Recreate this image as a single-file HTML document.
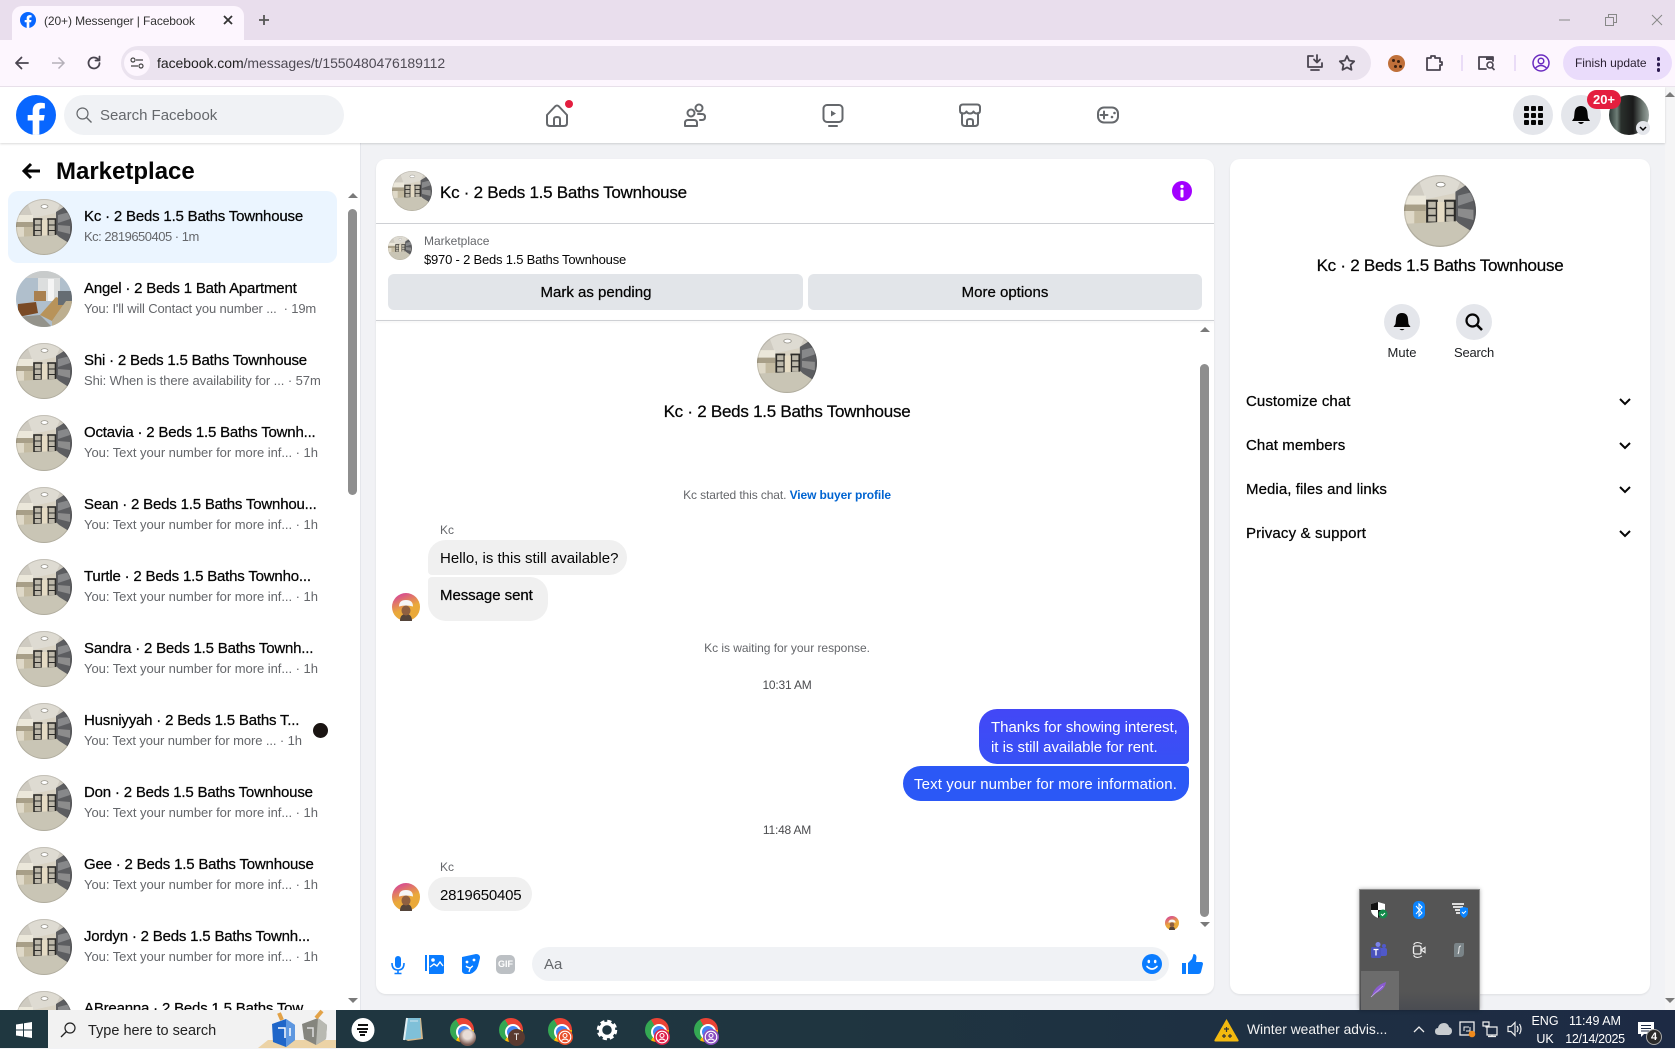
<!DOCTYPE html>
<html lang="en"><head><meta charset="utf-8"><title>Messenger | Facebook</title>
<style>
*{box-sizing:border-box;margin:0;padding:0}
html,body{width:1675px;height:1048px;overflow:hidden;background:#f1f2f5;font-family:"Liberation Sans",sans-serif;color:#050505}
.a{position:absolute}
.t{position:absolute;white-space:nowrap;height:20px;line-height:20px}
.m{-webkit-text-stroke:.25px currentColor}
.b{border-radius:50%}
.c{text-align:center;transform:translateX(-50%)}
svg{position:absolute;overflow:visible}
.title{font-size:15px;left:84px;letter-spacing:-.19px}
.sub{font-size:13px;left:84px;color:#65676b;letter-spacing:-.04px}
.h17{font-size:17px;letter-spacing:-.26px}
.ic{fill:none;stroke:#65686c;stroke-width:2;stroke-linecap:round;stroke-linejoin:round}
.tb{fill:none;stroke:#4a4550;stroke-width:1.8;stroke-linecap:round;stroke-linejoin:round}
.rowt{font-size:15px;left:1246px;letter-spacing:.08px}
.chr{position:absolute;width:24px;height:24px;border-radius:50%;background:conic-gradient(from -30deg,#ea4335 0 120deg,#fbbc05 120deg 240deg,#34a853 240deg 360deg);top:1018px}
.chr:after{content:"";position:absolute;left:6px;top:6px;width:12px;height:12px;border-radius:50%;background:#4285f4;border:2px solid #fff}
.tray{color:#fff;font-size:12.5px;text-align:center}
</style></head><body>
<svg width="0" height="0" style="position:absolute"><defs>
<clipPath id="cc"><circle cx="28" cy="28" r="28"/></clipPath>
<g id="room"><g clip-path="url(#cc)">
<rect width="56" height="56" fill="#d9d3c4"/>
<polygon points="0,0 56,0 56,10 40,14 17,19 0,15" fill="#cfcbc1"/>
<polygon points="10,0 46,0 40,14 17,19" fill="#dedbd2"/>
<ellipse cx="28.500" cy="7.500" rx="3.500" ry="1.800" fill="#fff" stroke="#8f8c83" stroke-width=".7"/>
<rect x="0" y="16" width="17" height="7" fill="#ebe7da"/>
<rect x="0" y="23" width="17" height="5" fill="#a89f88"/>
<rect x="0" y="28" width="8" height="10" fill="#dfd9c8"/><rect x="8" y="28" width="10" height="10" fill="#c4bba2"/>
<polygon points="40,13 48,8 56,12 56,46 51,46 40,35" fill="#5c5d60"/>
<polygon points="42,16 54,13 54,20 42,24" fill="#87888a"/><polygon points="42,26 54,27 54,35 42,32" fill="#8c8c8c"/>
<rect x="18" y="20" width="7.500" height="17" fill="#bdb8aa" stroke="#2c2b28" stroke-width="1.600"/>
<rect x="32" y="20" width="7.500" height="17" fill="#bdb8aa" stroke="#2c2b28" stroke-width="1.600"/>
<rect x="25.800" y="21" width="5.800" height="16" fill="#e5dbc4"/>
<path d="M18 26h7.500M18 31.500h7.500M32 26h7.500M32 31.500h7.500" stroke="#2c2b28" stroke-width="1.100"/>
<polygon points="0,38 18,37 40,36 56,46 56,56 0,56" fill="#c9c5b5"/>
<circle cx="28" cy="28" r="27.500" fill="none" stroke="#000" stroke-opacity=".12"/>
</g></g>
<g id="apt"><g clip-path="url(#cc)">
<rect width="56" height="56" fill="#b0bfcc"/>
<rect x="22" y="0" width="22" height="30" fill="#dcdede"/>
<rect x="32" y="8" width="6" height="22" fill="#f5f5f5"/>
<rect x="0" y="0" width="56" height="7" fill="#c8cbcb"/>
<polygon points="2,33 20,31 22,42 2,46" fill="#7a4a25"/><rect x="18" y="20" width="12" height="10" fill="#a9804f"/>
<polygon points="24,44 40,26 50,30 36,50" fill="#b8935a"/>
<rect x="42" y="20" width="14" height="14" fill="#666d73"/>
<polygon points="0,46 24,44 36,56 0,56" fill="#94938b"/>
<polygon points="36,50 50,30 56,30 56,56 36,56" fill="#bdaf90"/>
</g></g>
<g id="fb"><circle cx="18" cy="18" r="18" fill="#0866ff"/><path d="M25 23l.8-5H21v-3.500c0-1.400.5-2.500 2.700-2.500H26V7.400c-1.300-.2-2.700-.4-4-.4-4.100 0-7 2.500-7 7v4h-4.500v5H15v12.700c1 .2 2 .3 3 .3s2-.1 3-.3V23h4z" fill="#fff"/></g>
<linearGradient id="kg" x1="0" y1="0" x2=".4" y2="1"><stop offset=".15" stop-color="#d84f8e"/><stop offset=".65" stop-color="#eaa93a"/></linearGradient>
<g id="kc"><circle cx="14" cy="14" r="14" fill="url(#kg)"/><path d="M8 28q0-7 6-7t6 7z" fill="#54443a"/><ellipse cx="14" cy="17.500" rx="4.500" ry="5" fill="#8f6040"/><path d="M7 13.500Q7 7 14 7t7 6.500q-7-2-14 0z" fill="#f6f6f6"/></g>
<g id="pb"><circle cx="8" cy="8" r="8" fill="currentColor"/><circle cx="8" cy="8" r="5.800" fill="none" stroke="#fff" stroke-width="1.100"/><circle cx="8" cy="6.500" r="2" fill="none" stroke="#fff" stroke-width="1.100"/><path d="M4.500 11.500q3.500-3 7 0" fill="none" stroke="#fff" stroke-width="1.100"/></g>
</defs></svg>

<!-- Chrome -->
<div class="a" style="left:0;top:0;width:1675px;height:40px;background:#e9deed"></div>
<div class="a" style="left:12px;top:6px;width:232px;height:34px;background:#fdf6fe;border-radius:10px 10px 0 0"></div>
<svg style="left:20px;top:12px" width="16" height="16" viewBox="0 0 36 36"><use href="#fb"/></svg>
<div class="t" style="left:44px;top:11px;font-size:12px;letter-spacing:-.1px;color:#333">(20+) Messenger | Facebook</div>
<svg style="left:223px;top:15px" width="10" height="10"><path d="M1 1l8 8M9 1l-8 8" stroke="#333" stroke-width="1.800"/></svg>
<svg style="left:258px;top:14px" width="12" height="12"><path d="M6 1v10M1 6h10" stroke="#555" stroke-width="1.800"/></svg>
<svg style="left:1559px;top:15px" width="12" height="10"><path d="M0 5h11" stroke="#888"/></svg>
<svg style="left:1605px;top:14px" width="12" height="12"><path d="M.5 3.500h8v8h-8zM3.500 3V.5h8v8H9" fill="none" stroke="#888"/></svg>
<svg style="left:1651px;top:14px" width="12" height="12"><path d="M1 1l10 10M11 1L1 11" stroke="#888"/></svg>
<div class="a" style="left:0;top:40px;width:1675px;height:47px;background:#fdf6fe;border-bottom:1px solid #eae2ec"></div>
<svg style="left:14px;top:55px" width="16" height="16"><path class="tb" d="M14 8H2M7.500 2.500L2 8l5.500 5.500" stroke-width="1.500"/></svg>
<svg style="left:50px;top:55px" width="16" height="16"><path d="M2 8h12M8.500 2.500L14 8l-5.500 5.500" fill="none" stroke="#b5b0b9" stroke-width="1.500"/></svg>
<svg style="left:86px;top:55px" width="16" height="16"><path class="tb" d="M13.500 8a5.500 5.500 0 1 1-1.700-4M13.500 1.500v4h-4"/></svg>
<div class="a" style="left:121px;top:46px;width:1250px;height:34px;background:#ebe3ef;border-radius:17px"></div>
<div class="a b" style="left:124px;top:50px;width:26px;height:26px;background:#fdf6fe"></div>
<svg style="left:130px;top:56px" width="14" height="14"><path d="M6 4h7M1 10h7" stroke="#444" stroke-width="1.200"/><circle cx="3" cy="4" r="2" fill="none" stroke="#444" stroke-width="1.200"/><circle cx="11" cy="10" r="2" fill="none" stroke="#444" stroke-width="1.200"/></svg>
<div class="t" style="left:157px;top:53px;font-size:14px;letter-spacing:-.05px;color:#1f1f1f">facebook.com<span style="color:#4f4b55">/messages/t/1550480476189112</span></div>
<svg style="left:1306px;top:54px" width="18" height="18"><path class="tb" d="M7 2H2v11h14V9M5 16h8M11 1v7M8 5.500l3 3 3-3"/></svg>
<svg style="left:1338px;top:54px" width="18" height="18"><path class="tb" d="M9 2l2.200 4.600 5 .7-3.600 3.500.9 5L9 13.400 4.500 15.800l.9-5L1.800 7.300l5-.7z"/></svg>
<div class="a b" style="left:1388px;top:55px;width:17px;height:17px;background:#c0703a"></div>
<div class="a" style="left:1392px;top:59px;width:3px;height:3px;background:#3a2010;border-radius:50%;box-shadow:5px 1px #3a2010,2px 6px #3a2010,7px 6px #3a2010"></div>
<svg style="left:1425px;top:54px" width="18" height="18"><path class="tb" d="M2 4h4V2h4v2h5v4h2v3h-2v5H2z"/></svg>
<div class="a" style="left:1461px;top:55px;width:2px;height:16px;background:#eadcf7"></div>
<svg style="left:1477px;top:54px" width="19" height="18"><path class="tb" d="M9 15H2V3h14v4"/><rect x="9" y="3" width="7" height="3" fill="#4a4550"/><circle cx="13" cy="11" r="3" fill="none" stroke="#4a4550" stroke-width="1.600"/><path d="M15 13.500l2.500 2.500" stroke="#4a4550" stroke-width="1.600"/></svg>
<div class="a" style="left:1514px;top:55px;width:2px;height:16px;background:#eadcf7"></div>
<svg style="left:1532px;top:54px" width="18" height="18"><circle cx="9" cy="9" r="8" fill="none" stroke="#6a2bc0" stroke-width="1.500"/><circle cx="9" cy="7" r="2.800" fill="none" stroke="#6a2bc0" stroke-width="1.500"/><path d="M3.500 14q5.500-5 11 0" fill="none" stroke="#6a2bc0" stroke-width="1.500"/></svg>
<div class="a" style="left:1563px;top:46px;width:109px;height:34px;background:#eadcfb;border-radius:17px"></div>
<div class="t" style="left:1575px;top:53px;font-size:12px;letter-spacing:-.04px;color:#2c2233">Finish update</div>
<div class="a b" style="left:1656.500px;top:57px;width:3.500px;height:3.500px;background:#2c1a50;box-shadow:0 5.500px #2c1a50,0 11px #2c1a50"></div>

<!-- FB nav -->
<div class="a" style="left:0;top:87px;width:1665px;height:56px;background:#fff;box-shadow:0 1px 2px rgba(0,0,0,.15);z-index:3"></div>
<div style="position:absolute;left:0;top:0;z-index:4">
<svg style="left:16px;top:95px" width="40" height="40" viewBox="0 0 36 36"><use href="#fb"/></svg>
<div class="a" style="left:64px;top:95px;width:280px;height:40px;background:#f0f2f5;border-radius:20px"></div>
<svg style="left:76px;top:107px" width="16" height="16"><circle cx="6.500" cy="6.500" r="5.500" fill="none" stroke="#65686c" stroke-width="1.200"/><path d="M10.500 10.500l5 5" stroke="#65686c" stroke-width="1.400"/></svg>
<div class="t" style="left:100px;top:106px;font-size:15px;letter-spacing:-.02px;color:#65686c">Search Facebook</div>
<svg style="left:545px;top:103px" width="24" height="24"><path class="ic" d="M2 12L10 3.500q2-2 4 0L22 12v8q0 3-3 3H5q-3 0-3-3z M9 23v-7q0-2 3-2t3 2v7"/></svg>
<div class="a b" style="left:565px;top:100px;width:8px;height:8px;background:#e41e3f"></div>
<svg style="left:683px;top:103px" width="24" height="24"><g class="ic"><circle cx="16" cy="5" r="3.500"/><circle cx="8" cy="10" r="3.500"/><path d="M2 23v-3q0-3 3-3h6q3 0 3 3v3zM15 11h4q3 0 3 3t-3 3h-2"/></g></svg>
<svg style="left:821px;top:103px" width="24" height="24"><rect class="ic" x="2.500" y="2" width="19" height="17" rx="3.500"/><path d="M10 7.500l5 3-5 3z" fill="#65686c"/><path class="ic" d="M8 23h8"/></svg>
<svg style="left:958px;top:103px" width="24" height="24"><g class="ic"><path d="M4 10v10q0 3 3 3h10q3 0 3-3V10"/><path d="M5 1.500h14q3 0 3 3v3q0 3-3 3-2.500 0-3.500-2-1 2-3.500 2t-3.500-2q-1 2-3.500 2-3 0-3-3v-3q0-3 3-3z"/><path d="M9 23v-5q0-2 3-2t3 2v5"/></g></svg>
<svg style="left:1096px;top:103px" width="24" height="24"><rect class="ic" x="2" y="4.500" width="20" height="15" rx="6"/><path class="ic" d="M8 8.500v7M4.500 12h7"/><circle cx="16" cy="14" r="1.300" fill="#65686c"/><circle cx="18.500" cy="10" r="1.300" fill="#65686c"/></svg>
<div class="a b" style="left:1513px;top:95px;width:40px;height:40px;background:#e4e6eb"></div>
<div class="a" style="left:1524px;top:106px;width:5px;height:5px;border-radius:1px;background:#050505;box-shadow:7px 0 #050505,14px 0 #050505,0 7px #050505,7px 7px #050505,14px 7px #050505,0 14px #050505,7px 14px #050505,14px 14px #050505"></div>
<div class="a b" style="left:1561px;top:95px;width:40px;height:40px;background:#e4e6eb"></div>
<svg style="left:1571px;top:105px" width="20" height="20"><path d="M10 1q6 0 6.500 7l.5 5 2 3H1l2-3 .5-5Q4 1 10 1zM7 17h6q-3 4-6 0z" fill="#050505"/></svg>
<div class="a b" style="left:1609px;top:95px;width:40px;height:40px;background:linear-gradient(90deg,#2c3835 0,#6f7f78 20%,#2a302c 30%,#1a1a1a 60%,#6f7a74 85%,#9aa4a0 100%)"></div>
<div class="a" style="left:1587px;top:90px;width:34px;height:19px;background:#e41e3f;border-radius:10px;color:#fff;font-size:13px;font-weight:bold;text-align:center;line-height:19px">20+</div>
<div class="a b" style="left:1636px;top:121px;width:14px;height:14px;background:#e4e6eb"></div>
<svg style="left:1639px;top:126px" width="8" height="6"><path d="M1 1l3 3 3-3" fill="none" stroke="#050505" stroke-width="1.500"/></svg>
</div>

<!-- Page scrollbar -->
<div class="a" style="left:1665px;top:87px;width:10px;height:923px;background:#f5f5f6"></div>
<svg style="left:1665px;top:92px" width="10" height="6"><path d="M5 0l5 5H0z" fill="#7a7a7a"/></svg>
<svg style="left:1665px;top:998px" width="10" height="6"><path d="M0 0h10L5 5z" fill="#7a7a7a"/></svg>

<!-- Sidebar -->
<div class="a" style="left:0;top:143px;width:361px;height:867px;background:#fff;border-right:1px solid #e4e6eb;overflow:hidden">
 <div style="position:absolute;left:0;top:-143px">
 <svg style="left:22px;top:162px" width="20" height="18"><path d="M18 9H3M9 2L2 9l7 7" fill="none" stroke="#050505" stroke-width="3"/></svg>
 <div class="t" style="left:56px;top:162px;font-size:24px;font-weight:bold;letter-spacing:0">Marketplace</div>
 <div class="a" style="left:8px;top:191px;width:329px;height:72px;background:#ebf5ff;border-radius:10px"></div>
 <svg style="left:16px;top:199px" width="56" height="56"><use href="#room"/></svg><div class="t m title" style="top:207px">Kc · 2 Beds 1.5 Baths Townhouse</div><div class="t sub" style="top:227px;letter-spacing:-.5px">Kc: 2819650405 · 1m</div>
 <svg style="left:16px;top:271px" width="56" height="56"><use href="#apt"/></svg><div class="t m title" style="top:279px">Angel · 2 Beds 1 Bath Apartment</div><div class="t sub" style="top:299px;letter-spacing:-.14px">You: I'll will Contact you number ... &nbsp;· 19m</div>
 <svg style="left:16px;top:343px" width="56" height="56"><use href="#room"/></svg><div class="t m title" style="top:351px">Shi · 2 Beds 1.5 Baths Townhouse</div><div class="t sub" style="top:371px;letter-spacing:-.07px">Shi: When is there availability for ... · 57m</div>
 <svg style="left:16px;top:415px" width="56" height="56"><use href="#room"/></svg><div class="t m title" style="top:423px">Octavia · 2 Beds 1.5 Baths Townh...</div><div class="t sub" style="top:443px">You: Text your number for more inf... · 1h</div>
 <svg style="left:16px;top:487px" width="56" height="56"><use href="#room"/></svg><div class="t m title" style="top:495px">Sean · 2 Beds 1.5 Baths Townhou...</div><div class="t sub" style="top:515px">You: Text your number for more inf... · 1h</div>
 <svg style="left:16px;top:559px" width="56" height="56"><use href="#room"/></svg><div class="t m title" style="top:567px">Turtle · 2 Beds 1.5 Baths Townho...</div><div class="t sub" style="top:587px">You: Text your number for more inf... · 1h</div>
 <svg style="left:16px;top:631px" width="56" height="56"><use href="#room"/></svg><div class="t m title" style="top:639px">Sandra · 2 Beds 1.5 Baths Townh...</div><div class="t sub" style="top:659px">You: Text your number for more inf... · 1h</div>
 <svg style="left:16px;top:703px" width="56" height="56"><use href="#room"/></svg><div class="t m title" style="top:711px">Husniyyah · 2 Beds 1.5 Baths T...</div><div class="t sub" style="top:731px;letter-spacing:-.1px">You: Text your number for more ... · 1h</div>
 <div class="a b" style="left:313px;top:723px;width:15px;height:15px;background:#1a1412"></div>
 <svg style="left:16px;top:775px" width="56" height="56"><use href="#room"/></svg><div class="t m title" style="top:783px">Don · 2 Beds 1.5 Baths Townhouse</div><div class="t sub" style="top:803px">You: Text your number for more inf... · 1h</div>
 <svg style="left:16px;top:847px" width="56" height="56"><use href="#room"/></svg><div class="t m title" style="top:855px">Gee · 2 Beds 1.5 Baths Townhouse</div><div class="t sub" style="top:875px">You: Text your number for more inf... · 1h</div>
 <svg style="left:16px;top:919px" width="56" height="56"><use href="#room"/></svg><div class="t m title" style="top:927px">Jordyn · 2 Beds 1.5 Baths Townh...</div><div class="t sub" style="top:947px">You: Text your number for more inf... · 1h</div>
 <svg style="left:16px;top:991px" width="56" height="56"><use href="#room"/></svg><div class="t m title" style="top:999px">ABreanna · 2 Beds 1.5 Baths Tow...</div>
 <svg style="left:348px;top:193px" width="10" height="6"><path d="M5 0l5 5H0z" fill="#7a7a7a"/></svg>
 <div class="a" style="left:348px;top:209px;width:9px;height:286px;background:#8e8e8e;border-radius:5px"></div>
 <svg style="left:348px;top:998px" width="10" height="6"><path d="M0 0h10L5 5z" fill="#7a7a7a"/></svg>
 </div>
</div>

<!-- Chat card -->
<div class="a" style="left:376px;top:159px;width:838px;height:835px;background:#fff;border-radius:10px;box-shadow:0 1px 2px rgba(0,0,0,.08)"></div>
<svg style="left:392px;top:171px" width="40" height="40" viewBox="0 0 56 56"><use href="#room"/></svg>
<div class="t m h17" style="left:440px;top:183px">Kc · 2 Beds 1.5 Baths Townhouse</div>
<svg style="left:1172px;top:181px" width="20" height="20"><circle cx="10" cy="10" r="10" fill="#a200ff"/><circle cx="10" cy="5.500" r="1.700" fill="#fff"/><rect x="8.500" y="8.500" width="3" height="8" rx="1" fill="#fff"/></svg>
<div class="a" style="left:376px;top:223px;width:838px;height:1px;background:#ced0d4"></div>
<svg style="left:388px;top:236px" width="24" height="24" viewBox="0 0 56 56"><use href="#room"/></svg>
<div class="t" style="left:424px;top:231px;font-size:12px;color:#65676b">Marketplace</div>
<div class="t" style="left:424px;top:250px;font-size:13px;letter-spacing:-.2px">$970 - 2 Beds 1.5 Baths Townhouse</div>
<div class="a" style="left:388px;top:274px;width:415px;height:36px;background:#e2e5e9;border-radius:6px"></div>
<div class="a" style="left:808px;top:274px;width:394px;height:36px;background:#e2e5e9;border-radius:6px"></div>
<div class="t m c" style="left:596px;top:283px;font-size:15px">Mark as pending</div>
<div class="t m c" style="left:1005px;top:283px;font-size:15px">More options</div>
<div class="a" style="left:376px;top:320px;width:838px;height:1px;background:#ced0d4;box-shadow:0 1px 2px rgba(0,0,0,.08)"></div>

<svg style="left:757px;top:333px" width="60" height="60" viewBox="0 0 56 56"><use href="#room"/></svg>
<div class="t m c h17" style="left:787px;top:402px">Kc · 2 Beds 1.5 Baths Townhouse</div>
<div class="t c" style="left:787px;top:485px;font-size:12px;letter-spacing:-.1px;color:#65676b">Kc started this chat. <b style="color:#0064d1">View buyer profile</b></div>
<div class="t" style="left:440px;top:520px;font-size:12px;color:#65676b">Kc</div>
<div class="a" style="left:428px;top:540px;width:199px;height:35px;background:#f0f0f0;border-radius:18px 18px 18px 4px"></div>
<div class="t" style="left:440px;top:549px;font-size:15px">Hello, is this still available?</div>
<div class="a" style="left:428px;top:577px;width:120px;height:44px;background:#f0f0f0;border-radius:4px 18px 18px 18px"></div>
<div class="t m" style="left:440px;top:586px;font-size:15px;letter-spacing:-.05px">Message sent</div>
<svg style="left:392px;top:593px" width="28" height="28"><use href="#kc"/></svg>
<div class="t c" style="left:787px;top:638px;font-size:12px;letter-spacing:-.03px;color:#65676b">Kc is waiting for your response.</div>
<div class="t c" style="left:787px;top:675px;font-size:12px;letter-spacing:-.2px;color:#4b4c4f">10:31 AM</div>
<div class="a" style="left:979px;top:709px;width:210px;height:55px;background:linear-gradient(#4347f6,#3751f5);border-radius:18px 18px 4px 18px"></div>
<div class="t" style="left:991px;top:718px;font-size:15px;color:#fff;letter-spacing:-.03px">Thanks for showing interest,</div>
<div class="t" style="left:991px;top:738px;font-size:15px;color:#fff;letter-spacing:-.03px">it is still available for rent.</div>
<div class="a" style="left:903px;top:766px;width:286px;height:35px;background:#2b58f6;border-radius:18px 4px 18px 18px"></div>
<div class="t" style="left:914px;top:775px;font-size:15px;color:#fff;letter-spacing:.12px">Text your number for more information.</div>
<div class="t c" style="left:787px;top:820px;font-size:12px;letter-spacing:-.2px;color:#4b4c4f">11:48 AM</div>
<div class="t" style="left:440px;top:857px;font-size:12px;color:#65676b">Kc</div>
<div class="a" style="left:428px;top:877px;width:104px;height:34px;background:#f0f0f0;border-radius:18px"></div>
<div class="t" style="left:440px;top:886px;font-size:15px;letter-spacing:-.2px">2819650405</div>
<svg style="left:392px;top:883px" width="28" height="28"><use href="#kc"/></svg>
<svg style="left:1165px;top:916px" width="14" height="14" viewBox="0 0 28 28"><use href="#kc"/></svg>
<svg style="left:1200px;top:327px" width="10" height="6"><path d="M5 0l5 5H0z" fill="#7a7a7a"/></svg>
<div class="a" style="left:1200px;top:364px;width:9px;height:553px;background:#8e8e8e;border-radius:5px"></div>
<svg style="left:1200px;top:922px" width="10" height="6"><path d="M0 0h10L5 5z" fill="#7a7a7a"/></svg>

<svg style="left:390px;top:955px" width="16" height="20"><rect x="5" y="1" width="6" height="12" rx="3" fill="#0a7cff"/><path d="M2 8q0 7 6 7t6-7M8 15v3M4.500 18.500h7" fill="none" stroke="#0a7cff" stroke-width="1.600"/></svg>
<svg style="left:424px;top:954px" width="20" height="20"><path d="M2 1v16" stroke="#0a7cff" stroke-width="2"/><path d="M5 1h13q2 0 2 2v15q0 2-2 2H5z" fill="#0a7cff"/><circle cx="9" cy="6" r="1.800" fill="#fff"/><path d="M6 13l4-3 3 2 3-4 3 4" fill="none" stroke="#fff" stroke-width="1.400"/></svg>
<svg style="left:460px;top:954px" width="20" height="20"><path d="M2 3l14-3q4 0 4 4l-2 8q-2 6-8 8H5q-3-1-3-3z" fill="#0a7cff"/><circle cx="7" cy="8" r="1.400" fill="#fff"/><circle cx="14" cy="6" r="1.400" fill="#fff"/><path d="M9 18q1-5 4-6M6 12q3 3 6 1" fill="none" stroke="#fff" stroke-width="1.300"/></svg>
<div class="a" style="left:496px;top:955px;width:19px;height:19px;border-radius:5px;background:#bcc0c4;color:#fff;font-size:9px;font-weight:bold;text-align:center;line-height:19px">GIF</div>
<div class="a" style="left:532px;top:947px;width:637px;height:34px;background:#f0f2f5;border-radius:18px"></div>
<div class="t" style="left:544px;top:955px;font-size:15px;color:#65686c">Aa</div>
<svg style="left:1142px;top:954px" width="20" height="20"><circle cx="10" cy="10" r="10" fill="#0a7cff"/><ellipse cx="6.800" cy="7.500" rx="1.300" ry="1.800" fill="#fff"/><ellipse cx="13.200" cy="7.500" rx="1.300" ry="1.800" fill="#fff"/><path d="M5 12.500q5 5 10 0" fill="none" stroke="#fff" stroke-width="1.600" stroke-linecap="round"/></svg>
<svg style="left:1181px;top:953px" width="22" height="22"><path d="M1 10h4v11H1zM7 10l4-4q1-3 1.500-5 3 0 3 3.500L15 9h5q2 0 2 2l-2 8q-.5 2-3 2H7z" fill="#0a7cff"/></svg>

<!-- Right card -->
<div class="a" style="left:1230px;top:159px;width:420px;height:835px;background:#fff;border-radius:10px;box-shadow:0 1px 2px rgba(0,0,0,.08)"></div>
<svg style="left:1404px;top:175px" width="72" height="72" viewBox="0 0 56 56"><use href="#room"/></svg>
<div class="t m c h17" style="left:1440px;top:256px">Kc · 2 Beds 1.5 Baths Townhouse</div>
<div class="a b" style="left:1384px;top:304px;width:36px;height:36px;background:#e4e6eb"></div>
<svg style="left:1393px;top:312px" width="18" height="20"><path d="M9 1q5.500 0 6 6l.5 5 2 3H.5l2-3 .5-5Q3.500 1 9 1zM6.500 17h5q-2.500 2.500-5 0z" fill="#050505"/></svg>
<div class="a b" style="left:1456px;top:304px;width:36px;height:36px;background:#e4e6eb"></div>
<svg style="left:1465px;top:313px" width="18" height="18"><circle cx="7.500" cy="7.500" r="6" fill="none" stroke="#050505" stroke-width="2.200"/><path d="M12 12l5 5" stroke="#050505" stroke-width="2.600"/></svg>
<div class="t c" style="left:1402px;top:343px;font-size:13px;color:#1c1e21">Mute</div>
<div class="t c" style="left:1474px;top:343px;font-size:13px;letter-spacing:-.2px;color:#1c1e21">Search</div>
<div class="t m rowt" style="top:392px">Customize chat</div>
<div class="t m rowt" style="top:436px">Chat members</div>
<div class="t m rowt" style="top:480px">Media, files and links</div>
<div class="t m rowt" style="top:524px;letter-spacing:.15px">Privacy &amp; support</div>
<svg style="left:1619px;top:398px" width="12" height="8"><path d="M1 1l5 5 5-5" fill="none" stroke="#050505" stroke-width="2"/></svg>
<svg style="left:1619px;top:442px" width="12" height="8"><path d="M1 1l5 5 5-5" fill="none" stroke="#050505" stroke-width="2"/></svg>
<svg style="left:1619px;top:486px" width="12" height="8"><path d="M1 1l5 5 5-5" fill="none" stroke="#050505" stroke-width="2"/></svg>
<svg style="left:1619px;top:530px" width="12" height="8"><path d="M1 1l5 5 5-5" fill="none" stroke="#050505" stroke-width="2"/></svg>

<!-- Tray popup -->
<div class="a" style="left:1359px;top:889px;width:121px;height:121px;background:linear-gradient(#555 85%,#4a4c52);border:1px solid #8a8a8a;border-bottom:none;box-shadow:0 0 4px rgba(0,0,0,.3);z-index:6"></div>
<div class="a" style="left:1361px;top:971px;width:38px;height:39px;background:#6c6c6c;z-index:6"></div>
<div style="position:absolute;left:0;top:0;z-index:7">
<svg style="left:1371px;top:902px" width="17" height="17"><path d="M7 0l7 2v6q0 5-7 8-7-3-7-8V2z" fill="#fff"/><path d="M7 0v8H0V2zM7 8h7q0 5-7 8z" fill="#111"/><circle cx="12" cy="12" r="4.500" fill="#128a4a"/><path d="M10 12l1.500 1.500L14 11" fill="none" stroke="#fff"/></svg>
<svg style="left:1413px;top:901px" width="12" height="18"><rect width="12" height="18" rx="5" fill="#0a84ff"/><path d="M3 5l6 7-3 3V3l3 3-6 7" fill="none" stroke="#fff"/></svg>
<svg style="left:1451px;top:902px" width="17" height="16"><path d="M1 2h12M2 5h10M4 8h6M5 11h4" stroke="#ddd" stroke-width="2"/><path d="M9 6l4-1 4 1v4q0 4-4 6-4-2-4-6z" fill="#0a84ff"/><path d="M11 10l1.500 1.500L15 9" fill="none" stroke="#fff"/></svg>
<svg style="left:1371px;top:942px" width="16" height="16"><circle cx="7" cy="2.500" r="2.500" fill="#7b83eb"/><circle cx="13" cy="4" r="2" fill="#5059c9"/><rect x="8" y="6" width="8" height="8" rx="2" fill="#5059c9"/><rect x="0" y="5" width="10" height="11" rx="1.500" fill="#4b53bc"/><path d="M2.500 7.500h5M5 7.500v6" stroke="#fff" stroke-width="1.300"/></svg>
<svg style="left:1412px;top:941px" width="16" height="18"><path d="M2 4V3q3-3 8 0M2 14v1q3 3 8 0" fill="none" stroke="#eee"/><rect x="1.500" y="5" width="7.500" height="8" rx="1.500" fill="none" stroke="#eee" stroke-width="1.300"/><path d="M9 9l4-2.500v5z" fill="none" stroke="#eee" stroke-width="1.200"/></svg>
<svg style="left:1453px;top:942px" width="12" height="16"><path d="M3 1h8v10q0 4-4 4H1V4q0-3 2-3z" fill="#7a8488"/><path d="M8 4Q6 4 6 7t-1 5" fill="none" stroke="#eee"/></svg>
<svg style="left:1371px;top:981px" width="16" height="16"><path d="M1 15Q3 5 15 1q-1 8-10 11z" fill="#8a5cd0"/><path d="M0 16L12 5" stroke="#c9aef0" stroke-width=".8"/></svg>
</div>

<!-- Taskbar -->
<div class="a" style="left:0;top:1010px;width:1675px;height:38px;background:linear-gradient(90deg,#1f3740,#1f3540 50%,#1d2a44);z-index:5"></div>
<div style="position:absolute;left:0;top:0;z-index:8">
<svg style="left:16px;top:1022px" width="16" height="16"><path d="M0 2.500l7-1v6H0zM8 1.300l8-1.300v7.500H8zM0 8.500h7v6l-7-1zM8 8.500h8V16l-8-1.300z" fill="#fff"/></svg>
<div class="a" style="left:48px;top:1010px;width:288px;height:38px;background:#f2f2f2"></div>
<svg style="left:60px;top:1022px" width="16" height="16"><circle cx="10" cy="6" r="5" fill="none" stroke="#222" stroke-width="1.200"/><path d="M6.500 9.500L1 15" stroke="#222" stroke-width="1.300"/></svg>
<div class="t" style="left:88px;top:1021px;font-size:14.500px;color:#222">Type here to search</div>
<svg style="left:258px;top:1010px" width="78" height="38"><path d="M0 38l10-8h68v8z" fill="#ecd3a6"/>
<path d="M14 14l14-5 9 6v15l-9 7-13-5z" fill="#1f66c9"/><path d="M28 9l9 6v15l-9 7z" fill="#5d97e0"/><path d="M24 10L21 3" stroke="#e2a247" stroke-width="4"/><path d="M20 18h7v10M32 18v8" fill="none" stroke="#fff" stroke-width="1.500"/>
<path d="M44 14l16-6 9 7-1 14-10 6-12-6z" fill="#85857e"/><path d="M60 8l9 7-1 14-10 6z" fill="#b8b9b2"/><path d="M58 8l6-7" stroke="#e2a247" stroke-width="4"/><path d="M49 18h6v9" fill="none" stroke="#ddd" stroke-width="1.500"/></svg>
<svg style="left:351px;top:1018px" width="24" height="24"><ellipse cx="12" cy="12" rx="11.500" ry="12" fill="#fff"/><path d="M7 7h10M6 11h11M8 14h8M9 17h5" stroke="#111" stroke-width="2"/></svg>
<svg style="left:400px;top:1017px" width="24" height="26"><path d="M8 1h13l2 21-15 2-4-2z" fill="#d6b88a"/><path d="M7 1h13l1 20-17 2z" fill="#7fc0d8"/><path d="M7 1L4 23" stroke="#dfeef2" stroke-width="2"/><path d="M10 4h8" stroke="#cfe3ee"/></svg>
<div class="chr" style="left:450px"></div><div class="a b" style="left:459px;top:1029px;width:17px;height:17px;background:radial-gradient(circle at 50% 35%,#e8dcd6 0 30%,#7a5a52 70%)"></div>
<div class="chr" style="left:499px"></div><div class="a b" style="left:508px;top:1029px;width:17px;height:17px;background:#5a3a30;color:#fff;font-size:9px;text-align:center;line-height:17px">T</div>
<div class="chr" style="left:548px"></div><svg style="left:557px;top:1029px;color:#e8502a" width="16" height="16"><use href="#pb"/></svg>
<svg style="left:597px;top:1020px" width="20" height="20"><circle cx="10" cy="10" r="6.500" fill="none" stroke="#fff" stroke-width="3.500"/><circle cx="10" cy="10" r="9" fill="none" stroke="#fff" stroke-width="2.500" stroke-dasharray="4.200 2.870"/></svg>
<div class="chr" style="left:645px"></div><svg style="left:654px;top:1029px;color:#e0234c" width="16" height="16"><use href="#pb"/></svg>
<div class="chr" style="left:694px"></div><svg style="left:703px;top:1029px;color:#8a4fc0" width="16" height="16"><use href="#pb"/></svg>

<svg style="left:1214px;top:1018px" width="25" height="24"><path d="M12.500 1l12 21q.5 1.500-1 1.500h-22q-1.500 0-1-1.500z" fill="#f2b90f"/><path d="M10 11h5M8 18h4M14 18h4M12.500 9v5M10 16v4M16 16v4" stroke="#333" stroke-width="1.200"/></svg>
<div class="t" style="left:1247px;top:1020px;font-size:13.800px;color:#f2f2f2">Winter weather advis...</div>
<svg style="left:1413px;top:1025px" width="12" height="8"><path d="M1 7l5-5 5 5" fill="none" stroke="#eee" stroke-width="1.300"/></svg>
<svg style="left:1435px;top:1022px" width="17" height="14"><path d="M4 13q-4 0-4-3.500T3 6q1-5 6-5 4 0 5 4 3 1 3 4t-3 4z" fill="#c8ccd0"/></svg>
<svg style="left:1459px;top:1021px" width="16" height="16"><rect x="1" y="1" width="14" height="13" fill="none" stroke="#eee" stroke-width="1.300"/><path d="M5 10V6h5M11 6v4H7" fill="none" stroke="#eee"/><circle cx="13" cy="13" r="3.300" fill="#f08a1c"/></svg>
<svg style="left:1482px;top:1021px" width="16" height="16"><path d="M1 1h6v4H1zM4 5v1h11v8H5V6M10 14v2M6 15.500h8" fill="none" stroke="#eee" stroke-width="1.200"/></svg>
<svg style="left:1507px;top:1021px" width="16" height="16"><path d="M1 5.500h3l4-4v13l-4-4H1z" fill="none" stroke="#eee" stroke-width="1.200"/><path d="M10 5q2 3 0 6M12.500 3q3 5 0 10" fill="none" stroke="#eee" stroke-width="1.200"/></svg>
<div class="t c tray" style="left:1545px;top:1011px">ENG</div>
<div class="t c tray" style="left:1545px;top:1029px">UK</div>
<div class="t c tray" style="left:1595px;top:1011px">11:49 AM</div>
<div class="t c tray" style="left:1595px;top:1029px;letter-spacing:-.3px">12/14/2025</div>
<svg style="left:1638px;top:1022px" width="16" height="16"><path d="M0 0h16v12H6l-3 3v-3H0z" fill="#fff"/><path d="M3 3.500h10M3 6.500h10M3 9h10" stroke="#1d2a44"/></svg>
<div class="a b" style="left:1646px;top:1029px;width:16px;height:16px;background:#2a2a2a;border:1px solid #aaa;color:#fff;font-size:11px;font-weight:bold;text-align:center;line-height:14px">4</div>
</div>
</body></html>
